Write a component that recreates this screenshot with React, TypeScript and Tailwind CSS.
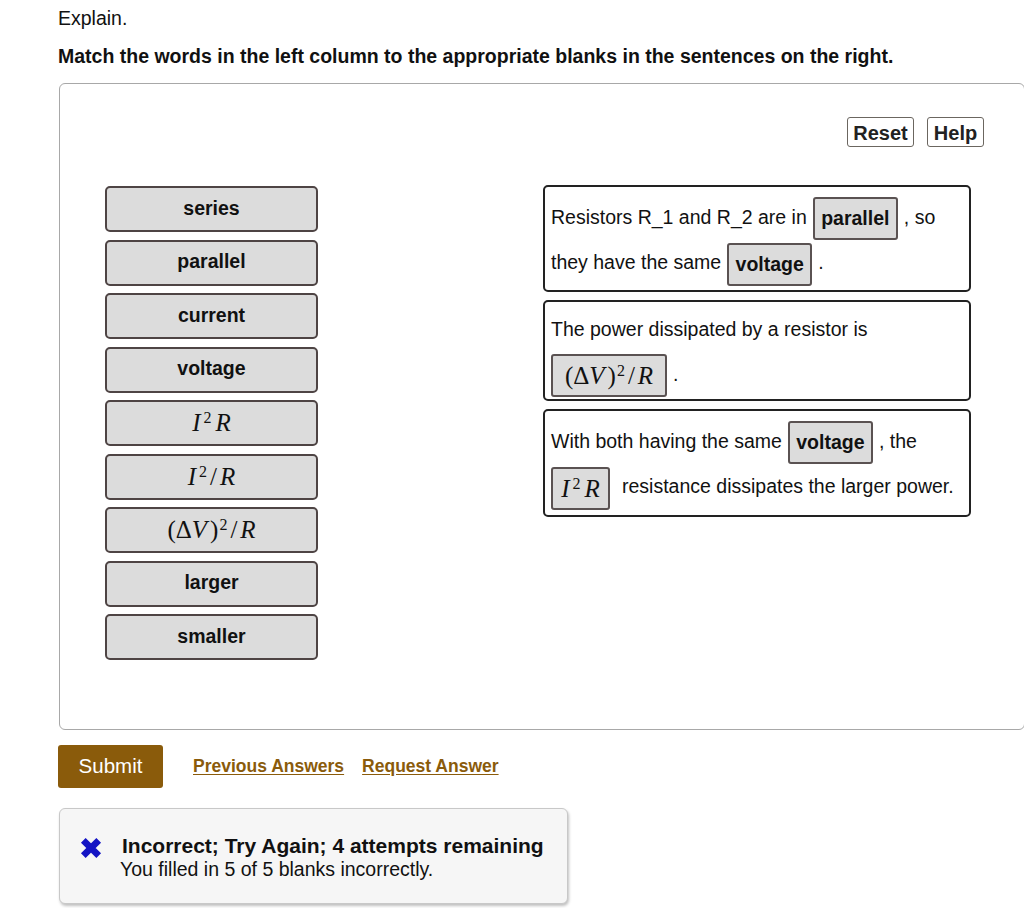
import React from "react";

const sans = "font-['Liberation_Sans',Arial,sans-serif]";
const serif = "font-['Liberation_Serif','Times_New_Roman',serif]";

const Math1: React.FC<{ kind: string }> = ({ kind }) => {
  if (kind === "I2R")
    return (
      <span className={`${serif} text-[25px] font-normal leading-none`}>
        <i className="mr-[3px]">I</i>
        <sup className="text-[16px]">2</sup>
        <i className="ml-[4px]">R</i>
      </span>
    );
  if (kind === "I2/R")
    return (
      <span className={`${serif} text-[25px] font-normal leading-none`}>
        <i className="mr-[3px]">I</i>
        <sup className="text-[16px]">2</sup>
        <span className="mx-[3px]">/</span>
        <i>R</i>
      </span>
    );
  return (
    <span className={`${serif} text-[25px] font-normal leading-none`}>
      (Δ<i className="mr-[3px]">V</i>)<sup className="ml-[1px] text-[16px]">2</sup>
      <span className="mx-[3px]">/</span>
      <i>R</i>
    </span>
  );
};

const items: { label: string; math?: string }[] = [
  { label: "series" },
  { label: "parallel" },
  { label: "current" },
  { label: "voltage" },
  { label: "", math: "I2R" },
  { label: "", math: "I2/R" },
  { label: "", math: "dV" },
  { label: "larger" },
  { label: "smaller" },
];

const Blank: React.FC<{ children: React.ReactNode; className?: string }> = ({ children, className }) => (
  <span
    className={`mx-[6px] inline-flex h-[43px] items-center justify-center rounded-[3px] border-2 border-[#5a5252] bg-[#dcdcdc] align-middle font-bold text-[#111] ${className ?? ""}`}
  >
    {children}
  </span>
);

export default function App() {
  return (
    <div className={`${sans} min-h-[908px] w-[1024px] overflow-hidden bg-white text-[#111]`}>
      <div className="pl-[58px] pt-[6px]">
        <p className="text-[19.5px] leading-[24px]">Explain.</p>
        <p className="mt-[14px] text-[19.5px] font-bold leading-[24px]">
          Match the words in the left column to the appropriate blanks in the sentences on the right.
        </p>
      </div>

      <div className="ml-[59px] mt-[15px] h-[647px] w-[966px] rounded-[6px] border border-[#a8a8a8] pt-[33px]">
        <div className="flex justify-end gap-[13px] pr-[40px]">
          <button className="h-[30px] w-[67px] rounded-[3px] border border-[#6b6660] text-[20px] font-bold text-[#222]">
            Reset
          </button>
          <button className="h-[30px] w-[57px] rounded-[3px] border border-[#6b6660] text-[20px] font-bold text-[#222]">
            Help
          </button>
        </div>

        <div className="mt-[38px] flex">
          <div className="ml-[45px] mt-[1px] flex w-[213px] flex-col gap-[7.5px]">
            {items.map((it, i) => (
              <div
                key={i}
                className="flex h-[46px] items-center justify-center rounded-[5px] border-2 border-[#4e4444] bg-[#dcdcdc] pb-[1px] text-[19.5px] font-bold"
              >
                {it.math ? <Math1 kind={it.math} /> : it.label}
              </div>
            ))}
          </div>

          <div className="ml-[225px] flex w-[428px] flex-col gap-[8px] text-[19.5px]">
            <div className="h-[107px] rounded-[5px] border-2 border-[#222] py-[8px] pl-[6px] leading-[45px]">
              Resistors R_1 and R_2 are in<Blank className="w-[85px]">parallel</Blank>, so
              <br />
              they have the same<Blank className="w-[85px]">voltage</Blank>.
            </div>
            <div className="h-[101px] rounded-[5px] border-2 border-[#222] pl-[6px] pt-[5px] leading-[45px]">
              The power dissipated by a resistor is
              <br />
              <Blank className="ml-0 w-[116px]">
                <Math1 kind="dV" />
              </Blank>
              .
            </div>
            <div className="h-[108px] rounded-[5px] border-2 border-[#222] py-[8px] pl-[6px] leading-[45px]">
              With both having the same<Blank className="w-[85px]">voltage</Blank>, the
              <br />
              <Blank className="ml-0 mr-[12px] w-[59px]">
                <Math1 kind="I2R" />
              </Blank>
              resistance dissipates the larger power.
            </div>
          </div>
        </div>
      </div>

      <div className="ml-[58px] mt-[15px] flex items-center">
        <button className="h-[43px] w-[105px] rounded-[3px] bg-[#8a5b0b] text-[20.5px] text-white">Submit</button>
        <a className="ml-[30px] text-[17.5px] font-bold text-[#8a5b0b] underline underline-offset-2" href="#">
          Previous Answers
        </a>
        <a className="ml-[18px] text-[17.5px] font-bold text-[#8a5b0b] underline underline-offset-2" href="#">
          Request Answer
        </a>
      </div>

      <div className="ml-[59px] mt-[20px] flex h-[96px] w-[509px] items-center rounded-[6px] border border-[#c8c8c8] bg-[#f6f6f6] shadow-[1px_2px_3px_rgba(0,0,0,0.25)]">
        <svg className="ml-[20px] mt-[-16px] h-[22px] w-[22px]" viewBox="0 0 20 20">
          <path d="M3 3 L17 17 M17 3 L3 17" stroke="#1414c4" strokeWidth="6" strokeLinecap="butt" />
        </svg>
        <div className="ml-[20px] pt-[2px]">
          <div className="text-[21px] font-bold leading-[25px]">Incorrect; Try Again; 4 attempts remaining</div>
          <div className="ml-[-2px] text-[19.5px] leading-[23px]">You filled in 5 of 5 blanks incorrectly.</div>
        </div>
      </div>
    </div>
  );
}
